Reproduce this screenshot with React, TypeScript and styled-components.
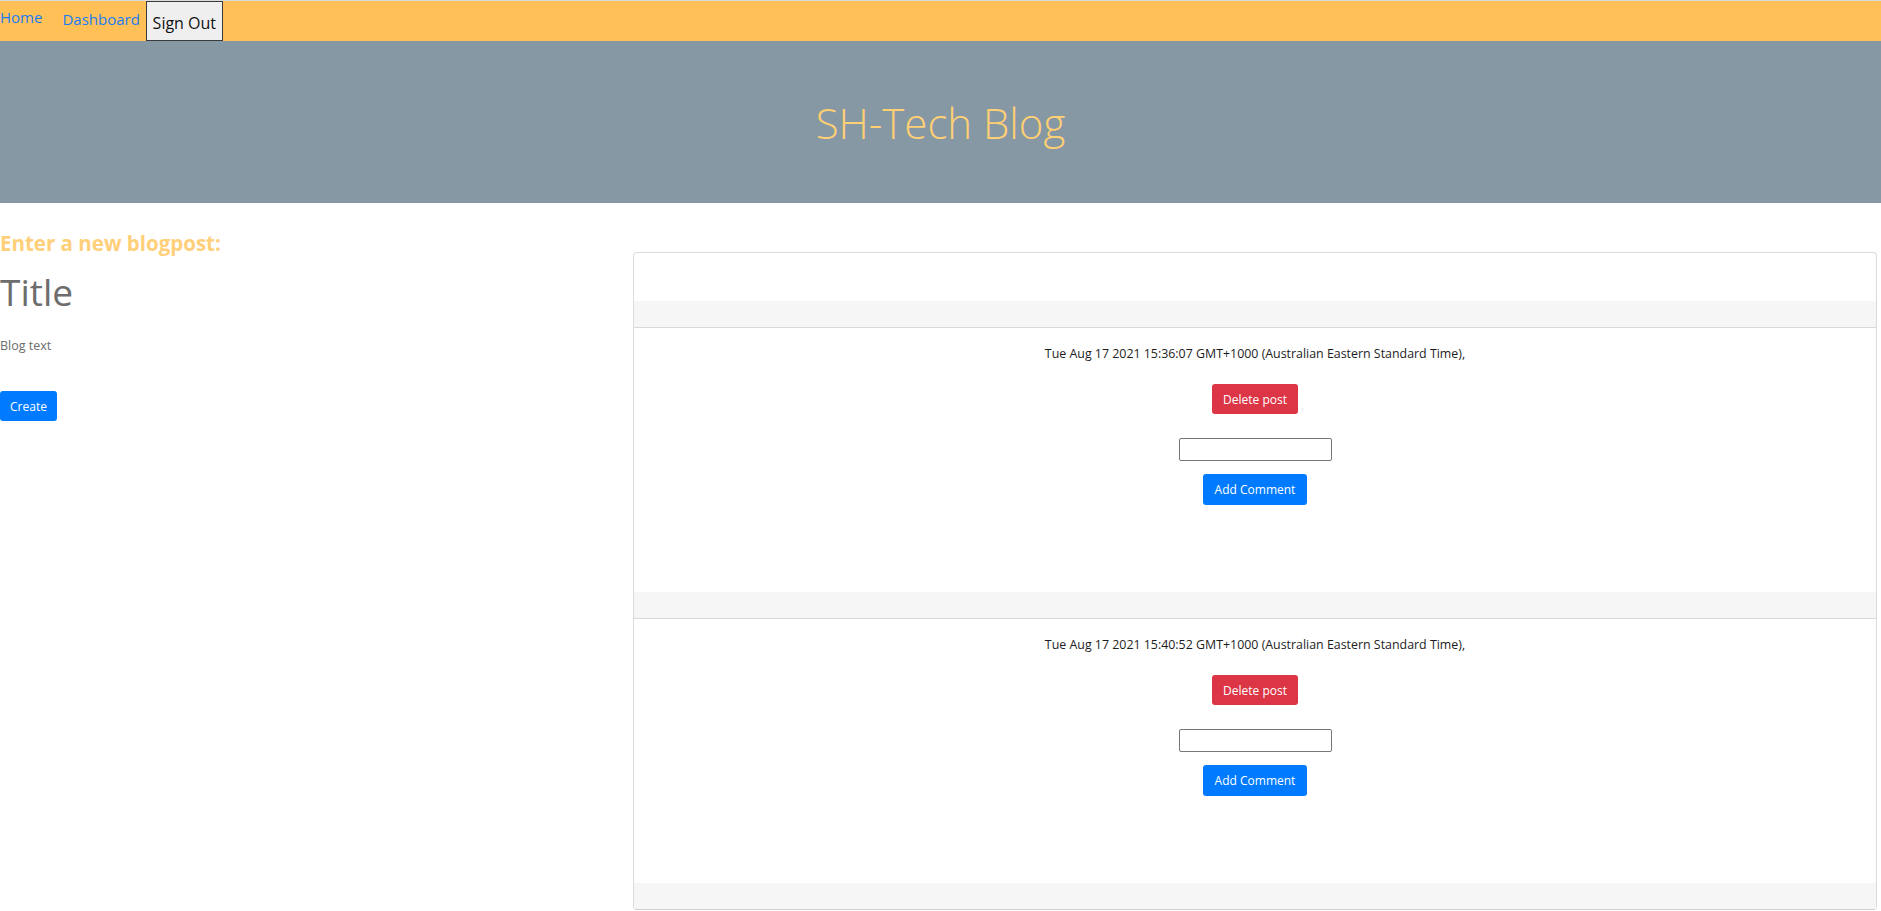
import React from "react";
import styled, { createGlobalStyle } from "styled-components";

const Global = createGlobalStyle`
  html, body { margin: 0; padding: 0; background: #fff; }
  body { font-family: "Open Sans", "Noto Sans", sans-serif; color: #212529; }
  * { box-sizing: border-box; }
`;

const Nav = styled.nav`
  display: flex;
  align-items: stretch;
  height: 41px;
  background: #ffc157;
  border-top: 1px solid #dcdcdc;
`;

const NavLink = styled.a<{ $drop?: number; $gap: number }>`
  color: #1a7cf5;
  text-decoration: none;
  font-size: 15px;
  padding-top: ${(p) => 9 + (p.$drop ?? 0)}px;
  margin-right: ${(p) => p.$gap}px;
  line-height: 1;
`;

const SignOut = styled.button`
  height: 40px;
  width: 77px;
  background: #efefef;
  border: 1px solid #3b3b3b;
  font-family: inherit;
  font-size: 16px;
  color: #111;
  padding: 4px 0 0;
`;

const Hero = styled.header`
  height: 162px;
  background: #8598a4;
  display: flex;
  align-items: center;
  justify-content: center;
`;

const HeroTitle = styled.h1`
  margin: 0;
  font-weight: 300;
  font-size: 42px;
  color: #ffcf74;
`;

const Main = styled.main`
  display: grid;
  grid-template-columns: 633px 1244px;
  align-items: start;
`;

const Compose = styled.section`
  display: flex;
  flex-direction: column;
  align-items: flex-start;
  padding-top: 28px;
`;

const ComposeHeading = styled.h2`
  margin: 0;
  font-size: 20.5px;
  font-weight: 700;
  color: #ffcf7a;
  line-height: 24px;
`;

const TitleInput = styled.input`
  border: none;
  outline: none;
  padding: 0;
  margin-top: 12px;
  width: 400px;
  font-family: inherit;
  font-size: 37px;
  line-height: 50px;
  height: 50px;
  background: transparent;
  &::placeholder { color: #6d6d6d; }
`;

const TextInput = styled.input`
  border: none;
  outline: none;
  padding: 0;
  margin-top: 19px;
  width: 400px;
  font-family: inherit;
  font-size: 12.5px;
  height: 18px;
  background: transparent;
  &::placeholder { color: #6d6d6d; }
`;

const Btn = styled.button<{ $variant: "primary" | "danger" }>`
  border: none;
  border-radius: 3px;
  color: #fff;
  font-family: inherit;
  font-size: 12px;
  height: 30px;
  padding: 0 8px;
  background: ${(p) => (p.$variant === "danger" ? "#dc3545" : "#007bff")};
`;

const CreateBtn = styled(Btn)`
  margin-top: 37px;
  width: 57px;
  padding: 0;
`;

const Card = styled.section`
  margin-top: 49px;
  border: 1px solid #dcdcdc;
  border-bottom-color: #cfcfcf;
  border-radius: 4px;
  overflow: hidden;
  display: flex;
  flex-direction: column;
`;

const Post = styled.article`
  display: flex;
  flex-direction: column;
  border-bottom: 1px solid #d9d9d9;
  &:last-child { border-bottom: none; }
`;

const PostBody = styled.div<{ $h: number }>`
  height: ${(p) => p.$h}px;
  display: flex;
  flex-direction: column;
  align-items: center;
  padding-top: 17px;
`;

const PostFooter = styled.div`
  height: 26px;
  background: #f6f6f6;
`;

const DateLine = styled.p`
  margin: 0;
  font-size: 12.4px;
  line-height: 18px;
  color: #1d1d1d;
`;

const DeleteBtn = styled(Btn)`
  margin-top: 21px;
  width: 86px;
  padding: 0;
`;

const CommentInput = styled.input`
  margin-top: 24px;
  width: 153px;
  height: 23px;
  border: 1px solid #767676;
  border-radius: 2px;
  padding: 0 4px;
`;

const CommentBtn = styled(Btn)`
  margin-top: 13px;
  height: 31px;
  width: 104px;
  padding: 0;
`;

const posts = [
  "Tue Aug 17 2021 15:36:07 GMT+1000 (Australian Eastern Standard Time),",
  "Tue Aug 17 2021 15:40:52 GMT+1000 (Australian Eastern Standard Time),",
];

export default function App() {
  return (
    <>
      <Global />
      <Nav>
        <NavLink href="#" $gap={20}>Home</NavLink>
        <NavLink href="#" $drop={2} $gap={6}>Dashboard</NavLink>
        <SignOut>Sign Out</SignOut>
      </Nav>
      <Hero>
        <HeroTitle>SH-Tech Blog</HeroTitle>
      </Hero>
      <Main>
        <Compose>
          <ComposeHeading>Enter a new blogpost:</ComposeHeading>
          <TitleInput placeholder="Title" />
          <TextInput placeholder="Blog text" />
          <CreateBtn $variant="primary">Create</CreateBtn>
        </Compose>
        <Card>
          <Post>
            <PostBody $h={48} />
            <PostFooter />
          </Post>
          {posts.map((d) => (
            <Post key={d}>
              <PostBody $h={264}>
                <DateLine>{d}</DateLine>
                <DeleteBtn $variant="danger">Delete post</DeleteBtn>
                <CommentInput />
                <CommentBtn $variant="primary">Add Comment</CommentBtn>
              </PostBody>
              <PostFooter />
            </Post>
          ))}
        </Card>
      </Main>
    </>
  );
}
